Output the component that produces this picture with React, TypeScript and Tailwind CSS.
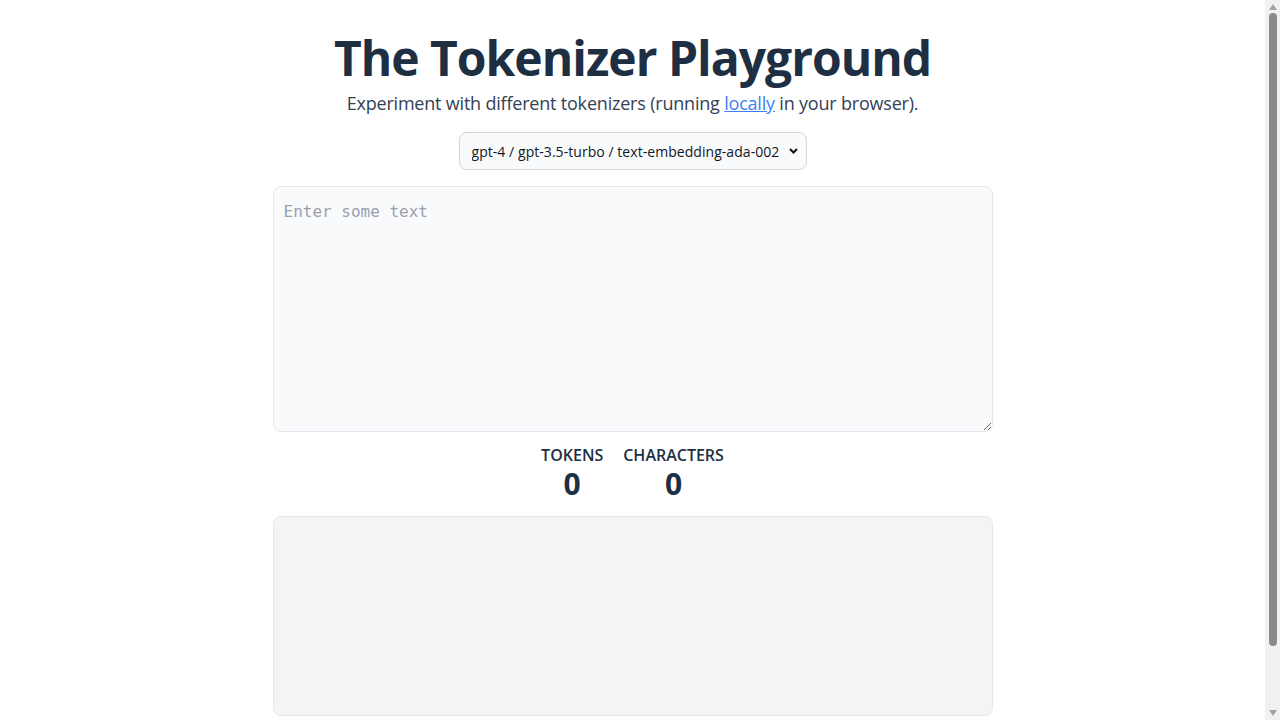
import { useState } from 'react';

const MODELS = [
  'gpt-4 / gpt-3.5-turbo / text-embedding-ada-002',
  'text-davinci-003 / text-davinci-002',
  'gpt-3',
  'llama',
  'mistral',
];

function Scrollbar() {
  return (
    <div className="flex h-[720px] w-[15px] shrink-0 flex-col items-center bg-[#f1f1f1]">
      <svg className="mt-[4px] h-[6px] w-[8px]" viewBox="0 0 8 6" fill="#a3a3a3">
        <path d="M4 0 8 6H0z" />
      </svg>
      <div className="mt-[3px] h-[633px] w-[8px] rounded-full bg-[#8a8a8a]" />
      <div className="flex-1" />
      <svg className="mb-[4px] h-[6px] w-[8px]" viewBox="0 0 8 6" fill="#a3a3a3">
        <path d="M0 0h8L4 6z" />
      </svg>
    </div>
  );
}

export default function App() {
  const [model, setModel] = useState(MODELS[0]);
  const [text, setText] = useState('');

  return (
    <div className="flex h-[720px] overflow-hidden bg-white font-['Open_Sans',sans-serif] text-[#1e2f44]">
      <main className="flex-1">
        <div className="mx-auto flex w-[720px] flex-col items-center pt-[30px] pb-[74px]">
          <h1 className="text-[48px] font-bold leading-[56px] tracking-[-1px]">The Tokenizer Playground</h1>
          <p className="mt-[3px] text-[18px] leading-[28px] tracking-[-0.2px] text-[#334155]">
            Experiment with different tokenizers (running{' '}
            <a href="#" className="text-[#3b82f6] underline">
              locally
            </a>{' '}
            in your browser).
          </p>

          <div className="relative mt-[15px]">
            <select
              value={model}
              onChange={(e) => setModel(e.target.value)}
              className="h-[38px] w-[348px] appearance-none rounded-lg border border-gray-300 bg-gray-50 pl-[12px] pr-6 text-[14px] tracking-[0.05px] text-gray-900"
            >
              {MODELS.map((m) => (
                <option key={m}>{m}</option>
              ))}
            </select>
            <svg
              className="pointer-events-none absolute right-[9px] top-[15px] h-[8px] w-[9px]"
              viewBox="0 0 9 8"
              fill="none"
              stroke="#111"
              strokeWidth="2"
            >
              <path d="M1 2 4.5 5.5 8 2" />
            </svg>
          </div>

          <textarea
            value={text}
            onChange={(e) => setText(e.target.value)}
            placeholder="Enter some text"
            className="mt-[16px] h-[246px] w-full rounded-lg border border-gray-200 bg-gray-50 px-[10px] pt-[13px] pb-[12px] font-['DejaVu_Sans_Mono',monospace] text-[16px] text-gray-900 placeholder:text-gray-400 focus:outline-none"
          />

          <div className="mt-[11px] flex gap-[20px]">
            <div className="flex flex-col items-center">
              <span className="text-[16px] font-semibold leading-[24px]">TOKENS</span>
              <span className="text-[30px] font-bold leading-[34px]">0</span>
            </div>
            <div className="flex flex-col items-center">
              <span className="text-[16px] font-semibold leading-[24px]">CHARACTERS</span>
              <span className="text-[30px] font-bold leading-[34px]">0</span>
            </div>
          </div>

          <div className="mt-[15px] h-[200px] w-full rounded-lg border border-gray-200 bg-gray-100" />
        </div>
      </main>
      <Scrollbar />
    </div>
  );
}
